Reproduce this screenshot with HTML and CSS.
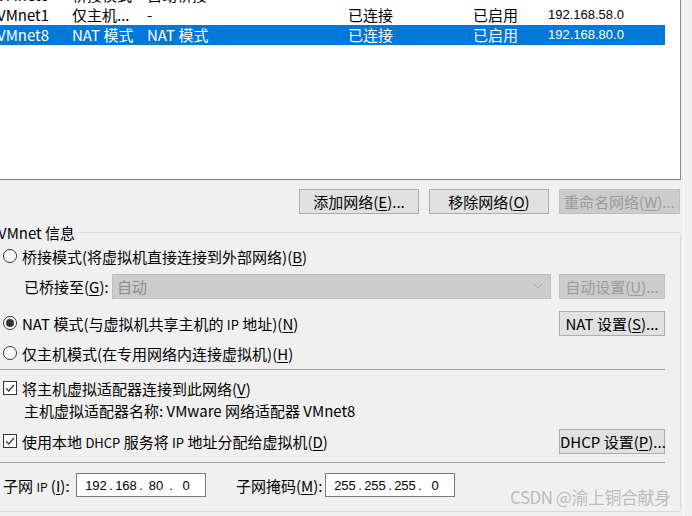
FILE: index.html
```html
<!DOCTYPE html>
<html lang="zh-CN">
<head>
<meta charset="utf-8">
<link rel="stylesheet" href="styles.css">
</head>
<body>
<div class="frame">
  <div class="list">
    <div class="row"><span>VMnet0</span><span>桥接模式</span><span>自动桥接</span><span>-</span><span>-</span><span>-</span></div>
    <div class="row"><span>VMnet1</span><span>仅主机...</span><span>-</span><span>已连接</span><span>已启用</span><span class="ip">192.168.58.0</span></div>
    <div class="row sel"><span>VMnet8</span><span>NAT 模式</span><span>NAT 模式</span><span>已连接</span><span>已启用</span><span class="ip">192.168.80.0</span></div>
  </div>

  <div class="btn-row">
    <button class="btn w120">添加网络(<u>E</u>)...</button>
    <button class="btn w120">移除网络(<u>O</u>)</button>
    <button class="btn w121 disabled">重命名网络(<u>W</u>)...</button>
  </div>

  <fieldset class="group">
    <legend class="legend">VMnet 信息</legend>
    <div class="group-body">
      <div class="line r-bridge">
        <span class="radio"></span><span>桥接模式(将虚拟机直接连接到外部网络)(<u>B</u>)</span>
      </div>
      <div class="line r-bridgeto">
        <span class="lbl">已桥接至(<u>G</u>):</span>
        <div class="select"><span>自动</span>
          <svg class="chev" width="10" height="6" viewBox="0 0 10 6"><polyline points="0.5,0.5 5,5 9.5,0.5" fill="none" stroke="#a8a8a8" stroke-width="1"/></svg>
        </div>
        <button class="btn w106 disabled">自动设置(<u>U</u>)...</button>
      </div>
      <div class="line r-nat">
        <span class="radio on"></span><span>NAT 模式(与虚拟机共享主机的 <span class="sm">IP</span> 地址)(<u>N</u>)</span>
        <button class="btn w106 push">NAT 设置(<u>S</u>)...</button>
      </div>
      <div class="line r-host">
        <span class="radio"></span><span>仅主机模式(在专用网络内连接虚拟机)(<u>H</u>)</span>
      </div>
      <div class="sep s1"></div>
      <div class="line r-chk1">
        <span class="chk"><svg width="12" height="12" viewBox="0 0 12 12"><polyline points="2,6.2 4.7,9 10,3" fill="none" stroke="#333" stroke-width="1.2"/></svg></span><span>将主机虚拟适配器连接到此网络(<u>V</u>)</span>
      </div>
      <div class="line r-name">
        <span>主机虚拟适配器名称: VMware 网络适配器 VMnet8</span>
      </div>
      <div class="line r-chk2">
        <span class="chk"><svg width="12" height="12" viewBox="0 0 12 12"><polyline points="2,6.2 4.7,9 10,3" fill="none" stroke="#333" stroke-width="1.2"/></svg></span><span>使用本地 <span class="sm">DHCP</span> 服务将 <span class="sm">IP</span> 地址分配给虚拟机(<u>D</u>)</span>
        <button class="btn w106 push">DHCP 设置(<u>P</u>)...</button>
      </div>
      <div class="sep s2"></div>
      <div class="line r-subnet">
        <span class="sl1">子网 <span class="ipl">IP</span> (<u>I</u>):</span>
        <div class="ipbox"><span class="oct">192</span><span class="dot">.</span><span class="oct">168</span><span class="dot">.</span><span class="oct">80</span><span class="dot">.</span><span class="oct">0</span></div>
        <span class="sl2">子网掩码(<u>M</u>):</span>
        <div class="ipbox"><span class="oct">255</span><span class="dot">.</span><span class="oct">255</span><span class="dot">.</span><span class="oct">255</span><span class="dot">.</span><span class="oct">0</span></div>
      </div>
    </div>
  </fieldset>
  <div class="watermark">CSDN @渝上铜合献身</div>
</div>
</body>
</html>
```

FILE: styles.css
```css
html, body {
  margin: 0;
  padding: 0;
}
body {
  background: #f0f0f0;
  font-family: "Noto Sans CJK SC", "Noto Sans", sans-serif;
  font-size: 15px;
  color: #000;
  width: 692px;
  height: 516px;
  overflow: hidden;
}
u {
  text-decoration: underline;
  text-underline-offset: 2px;
  text-decoration-thickness: 1px;
}
.frame {
  position: relative;
  width: 684px;
  height: 516px;
  border-right: 1px solid #fbfbfb;
  box-sizing: border-box;
}

/* list */
.list {
  width: 680px;
  height: 179px;
  background: #fff;
  border-right: 1px solid #828790;
  border-bottom: 1px solid #828790;
  overflow: hidden;
}
.row {
  display: grid;
  grid-template-columns: 75px 75px 201px 125px 75px 1fr;
  width: 668px;
  margin-left: -3px;
  height: 20px;
  line-height: 20px;
  white-space: nowrap;
}
.row:first-child {
  margin-top: -15px;
}
.row.sel {
  background: #0078d7;
  color: #fff;
}
.ip {
  font-family: "Liberation Sans", sans-serif;
  font-size: 13px;
}

/* buttons */
.btn-row {
  display: flex;
  justify-content: flex-end;
  gap: 10px;
  width: 680px;
  margin-top: 9px;
}
.btn {
  height: 25px;
  box-sizing: border-box;
  border: 1px solid #adadad;
  background: #e1e1e1;
  font-family: inherit;
  font-size: 15px;
  line-height: 21px;
  color: #000;
  padding: 0;
  white-space: nowrap;
}
.btn.disabled {
  background: #cccccc;
  border-color: #bfbfbf;
  color: #9a9a9a;
}
.w120 { width: 120px; }
.w121 { width: 121px; }
.w106 { width: 106px; flex: none; }
.push { margin-left: auto; }

/* group */
.group {
  margin: 10px 0 0 -2px;
  padding: 0;
  width: 683px;
  min-width: 0;
  box-sizing: border-box;
  border: 1px solid #d9d9d9;
  border-left: none;
  border-radius: 0 3px 3px 0;
}
.legend {
  padding: 0 4px 0 0;
  margin: 0;
  line-height: 17px;
  font-size: 15px;
}
.group-body {
  padding: 0 15px 4px 5px;
}
.line {
  display: flex;
  align-items: center;
  white-space: nowrap;
}
.r-bridge { height: 30px; }
.r-bridgeto { height: 30px; padding-left: 21px; }
.r-nat { height: 34px; margin-top: 5px; }
.r-host { height: 26px; }
.r-chk1 { height: 24px; margin-top: 6px; }
.r-name { height: 20px; padding-left: 21px; }
.r-chk2 { height: 26px; margin-top: 8px; }
.r-subnet { height: 44px; }

.sep {
  border-top: 1px solid #a0a0a0;
  margin-left: -5px;
}
.s1 { margin-top: 3px; }
.s2 { margin-top: 8px; }

.radio {
  width: 14px;
  height: 14px;
  box-sizing: border-box;
  border: 1px solid #333;
  border-radius: 50%;
  background: #fff;
  margin-right: 5px;
  flex: none;
  display: flex;
  align-items: center;
  justify-content: center;
}
.radio.on::after {
  content: "";
  width: 8px;
  height: 8px;
  border-radius: 50%;
  background: #333;
}
.chk {
  width: 14px;
  height: 14px;
  box-sizing: border-box;
  border: 1px solid #333;
  background: #fff;
  margin-right: 5px;
  flex: none;
  display: flex;
  align-items: center;
  justify-content: center;
}
.sm {
  font-size: 13px;
}
.lbl {
  width: 88px;
  flex: none;
}
.select {
  flex: 1;
  height: 25px;
  box-sizing: border-box;
  background: #cccccc;
  border: 1px solid #bfbfbf;
  color: #8c8c8c;
  display: flex;
  align-items: center;
  justify-content: space-between;
  padding: 0 7px 0 4px;
  margin-right: 8px;
}

/* subnet */
.sl1 {
  width: 73px;
  flex: none;
}
.ipl {
  font-size: 12px;
}
.sl2 {
  width: 89px;
  flex: none;
  margin-left: 30px;
}
.ipbox {
  width: 130px;
  height: 24px;
  box-sizing: border-box;
  background: #fff;
  border: 1px solid #7a7a7a;
  display: flex;
  align-items: center;
  padding-left: 7px;
  font-family: "Liberation Sans", sans-serif;
  font-size: 13px;
  flex: none;
}
.oct {
  width: 24px;
  text-align: center;
}
.dot {
  width: 6px;
  text-align: center;
}

.watermark {
  position: absolute;
  left: 510px;
  top: 484px;
  font-size: 17px;
  letter-spacing: -0.5px;
  color: rgba(140, 140, 140, 0.55);
  white-space: nowrap;
}
```
